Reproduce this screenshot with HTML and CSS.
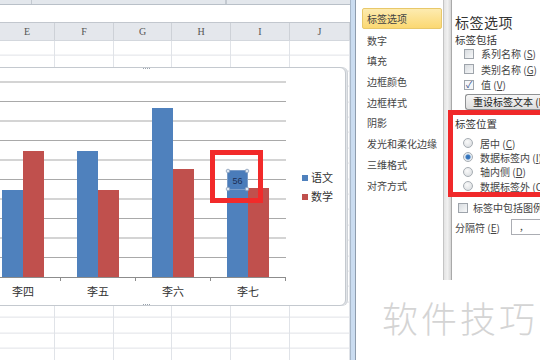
FILE: index.html
```html
<!DOCTYPE html>
<html lang="zh-CN">
<head>
  <meta charset="UTF-8">
  <title>设置数据标签格式</title>
  <link rel="stylesheet" href="styles.css">
</head>
<body>
  <div class="screen">
    <!-- 工作表区域 -->
    <section class="sheet">
      <div class="toolbar">
        <span class="tb-cell tb-a"></span>
        <span class="tb-cell tb-b"></span>
        <span class="tb-cell"></span>
      </div>
      <div class="formula"></div>
      <div class="col-heads">
        <div>E</div><div>F</div><div>G</div><div>H</div><div>I</div><div>J</div>
      </div>
      <div class="cells">
        <div></div><div></div><div></div><div></div><div></div><div></div>
      </div>

      <!-- 图表 -->
      <div class="chart">
        <svg class="plot" width="346" height="239" viewBox="0 67 346 239">
          <g class="grid">
            <line x1="0" y1="82" x2="286" y2="82"/>
            <line x1="0" y1="101.5" x2="286" y2="101.5"/>
            <line x1="0" y1="121" x2="286" y2="121"/>
            <line x1="0" y1="140.5" x2="286" y2="140.5"/>
            <line x1="0" y1="160" x2="286" y2="160"/>
            <line x1="0" y1="179.5" x2="286" y2="179.5"/>
            <line x1="0" y1="199" x2="286" y2="199"/>
            <line x1="0" y1="218.5" x2="286" y2="218.5"/>
            <line x1="0" y1="238" x2="286" y2="238"/>
            <line x1="0" y1="257.5" x2="286" y2="257.5"/>
          </g>
          <g class="blue">
            <rect x="2" y="190" width="21" height="87"/>
            <rect x="77" y="151" width="21" height="126"/>
            <rect x="152" y="108" width="21" height="169"/>
            <rect x="227" y="170" width="21" height="107"/>
          </g>
          <g class="red">
            <rect x="23" y="151" width="21" height="126"/>
            <rect x="98" y="190" width="21" height="87"/>
            <rect x="173" y="169" width="21" height="108"/>
            <rect x="248" y="188" width="21" height="89"/>
          </g>
          <g class="axis">
            <line x1="0" y1="277.5" x2="286" y2="277.5"/>
            <line x1="60.5" y1="277" x2="60.5" y2="281"/>
            <line x1="135.5" y1="277" x2="135.5" y2="281"/>
            <line x1="210.5" y1="277" x2="210.5" y2="281"/>
            <line x1="285.5" y1="277" x2="285.5" y2="281"/>
          </g>
          <g class="cats">
            <text x="23" y="296">李四</text>
            <text x="98" y="296">李五</text>
            <text x="173" y="296">李六</text>
            <text x="248" y="296">李七</text>
          </g>

          <!-- 选中的数据标签 -->
          <rect class="label-box" x="227.5" y="170.5" width="20" height="19"/>
          <text class="label-text" x="237.5" y="184">56</text>
          <g class="handles">
            <circle cx="228" cy="171" r="1.8"/>
            <circle cx="247" cy="171" r="1.8"/>
            <circle cx="228" cy="189" r="1.8"/>
            <circle cx="247" cy="189" r="1.8"/>
          </g>
          <rect class="mark" x="212.5" y="152.5" width="48" height="48"/>

          <g class="legend">
            <rect x="302" y="175" width="6" height="6" fill="#4f81bd"/>
            <text x="311" y="182">语文</text>
            <rect x="302" y="194" width="6" height="6" fill="#c0504d"/>
            <text x="311" y="201">数学</text>
          </g>

          <g class="dots">
            <rect x="143" y="68" width="1" height="1"/>
            <rect x="145" y="68" width="1" height="1"/>
            <rect x="147" y="68" width="1" height="1"/>
            <rect x="149" y="68" width="1" height="1"/>
            <rect x="143" y="304" width="1" height="1"/>
            <rect x="145" y="304" width="1" height="1"/>
            <rect x="147" y="304" width="1" height="1"/>
            <rect x="149" y="304" width="1" height="1"/>
          </g>
        </svg>
      </div>
    </section>

    <div class="frame"></div>

    <!-- 设置数据标签格式 对话框 -->
    <section class="dialog">
      <nav class="nav">
        <div class="nav-item active">标签选项</div>
        <div class="nav-item">数字</div>
        <div class="nav-item">填充</div>
        <div class="nav-item">边框颜色</div>
        <div class="nav-item">边框样式</div>
        <div class="nav-item">阴影</div>
        <div class="nav-item">发光和柔化边缘</div>
        <div class="nav-item">三维格式</div>
        <div class="nav-item">对齐方式</div>
      </nav>
      <div class="divider"></div>
      <div class="pane">
        <div class="pane-title">标签选项</div>
        <div class="group-title">标签包括</div>
        <div class="check-row"><span class="box"></span>系列名称 (<u>S</u>)</div>
        <div class="check-row"><span class="box"></span>类别名称 (<u>G</u>)</div>
        <div class="check-row"><span class="box checked">✓</span>值 (<u>V</u>)</div>
        <div class="reset-btn">重设标签文本 (R)</div>

        <div class="group-title pos-title">标签位置</div>
        <div class="radio-row"><span class="radio"></span>居中 (<u>C</u>)</div>
        <div class="radio-row"><span class="radio on"></span>数据标签内 (<u>I</u>)</div>
        <div class="radio-row"><span class="radio"></span>轴内侧 (<u>D</u>)</div>
        <div class="radio-row"><span class="radio"></span>数据标签外 (<u>O</u>)</div>

        <div class="check-row legend-row"><span class="box"></span>标签中包括图例项标示 (L)</div>
        <div class="sep-row">分隔符 (<u>E</u>)<span class="select">,</span></div>

        <div class="red-mark"></div>
      </div>
      <div class="watermark">软件技巧</div>
    </section>
  </div>
</body>
</html>
```

FILE: styles.css
```css
body {
  margin: 0;
  padding: 0;
  font-family: "Noto Sans CJK SC", "Noto Sans", sans-serif;
  background-color: white;
}

.screen {
  width: 540px;
  height: 360px;
  display: flex;
  overflow: hidden;
}

/* 工作表 */
.sheet {
  position: relative;
  width: 350px;
  flex: none;
  display: flex;
  flex-direction: column;
  overflow: hidden;
}

.toolbar {
  height: 4px;
  display: flex;
  background-color: #e3e7ec;
  border-bottom: 1px solid #b9c0c8;
}

.tb-cell {
  border-right: 1px solid #c3c9d0;
}

.tb-a {
  width: 31px;
}

.tb-b {
  width: 193px;
}

.formula {
  height: 17px;
  background-color: white;
}

.col-heads {
  height: 17px;
  display: grid;
  grid-template-columns: 55px 59px 58px 59px 59px 60px;
  background-color: #e4e7ec;
  border-top: 1px solid #c2c7ce;
  border-bottom: 1px solid #d3d7dd;
}

.col-heads div {
  border-right: 1px solid #cdd1d7;
  font-family: "Liberation Serif", serif;
  font-size: 10px;
  line-height: 17px;
  color: #555;
  text-align: center;
}

.cells {
  flex: 1;
  display: grid;
  grid-template-columns: 55px 59px 58px 59px 59px 60px;
  background-image: repeating-linear-gradient(to bottom, transparent 0, transparent 14.4px, #dfe2e7 14.4px, #dfe2e7 15.4px);
  background-position: 0 -0.4px;
}

.cells div {
  border-right: 1px solid #e0e3e8;
}

/* 图表 */
.chart {
  position: absolute;
  left: -10px;
  top: 67px;
  width: 354px;
  height: 237px;
  background-color: white;
  border: 1px solid #c4c9cf;
  border-radius: 6px;
  box-shadow: 1px 0 0 #e1e4e8, 2px 0 0 #cfd3d8;
}

.plot {
  position: absolute;
  left: 9px;
  top: -1px;
}

.grid line {
  stroke: #a9a9a9;
  stroke-width: 1;
}

.blue rect {
  fill: #4f81bd;
}

.red rect {
  fill: #c0504d;
}

.axis line {
  stroke: #8c8c8c;
  stroke-width: 1;
}

.cats text {
  font-family: "Noto Sans CJK SC", sans-serif;
  font-size: 11px;
  fill: #333;
  text-anchor: middle;
}

.label-box {
  fill: #4a7cba;
  stroke: #7a9cc8;
  stroke-width: 1;
}

.label-text {
  font-family: "Liberation Sans", sans-serif;
  font-size: 9px;
  fill: #1c2f55;
  text-anchor: middle;
}

.handles circle {
  fill: #dfe8f3;
  stroke: #8aa0bb;
  stroke-width: 0.8;
}

.mark {
  fill: none;
  stroke: #f22a2a;
  stroke-width: 5;
}

.legend text {
  font-family: "Noto Sans CJK SC", sans-serif;
  font-size: 11px;
  fill: #333;
}

.dots rect {
  fill: #9aa3ad;
}

/* 对话框边框 */
.frame {
  width: 4px;
  flex: none;
  background-color: #cadcf0;
  border-left: 1px solid #a8b8ca;
  border-right: 1px solid #8e9cad;
}

.dialog {
  position: relative;
  flex: 1;
  display: flex;
  align-items: flex-start;
  background-color: white;
  padding-left: 6px;
  color: #444;
  font-size: 10px;
}

.nav {
  width: 80px;
  flex: none;
  padding-top: 8px;
}

.nav-item {
  height: 20.7px;
  line-height: 20.7px;
  padding-left: 5px;
  white-space: nowrap;
}

.nav-item.active {
  height: 19px;
  line-height: 19px;
  margin-bottom: 1.7px;
  background: linear-gradient(to bottom, #fdebb0, #fbd872);
  border: 1px solid #e8c86a;
  border-radius: 2px;
  padding-left: 4px;
}

.divider {
  width: 7px;
  height: 280px;
  flex: none;
  margin-left: 1px;
  background: linear-gradient(to right, #e3e3e3, #f0f0f0, #d6d6d6);
  border-left: 1px solid #c4c4c4;
  border-right: 1px solid #a9a9a9;
}

.pane {
  position: relative;
  flex: 1;
  padding-left: 3px;
  white-space: nowrap;
}

.pane-title {
  margin-top: 13px;
  font-size: 14px;
  letter-spacing: 0.5px;
  line-height: 18px;
  color: #333;
}

.group-title {
  margin-top: 2px;
  line-height: 13px;
  font-size: 10.5px;
  color: #333;
}

.check-row {
  height: 15.5px;
  display: flex;
  align-items: center;
  padding-left: 9px;
}

.box {
  width: 8px;
  height: 8px;
  margin-right: 7px;
  border: 1px solid #9ea4ab;
  background: linear-gradient(to bottom right, #d8dce0, #f7f8f9);
  font-size: 9px;
  line-height: 8px;
  color: #34518a;
  text-align: center;
}

.box.checked {
  background: #f4f6f9;
}

.reset-btn {
  margin-top: 1.5px;
  margin-left: 10px;
  height: 14px;
  line-height: 14px;
  padding-left: 7px;
  border: 1px solid #8f9193;
  border-right: none;
  border-radius: 3px 0 0 3px;
  background: linear-gradient(to bottom, #f6f6f6, #dedede);
  color: #222;
}

.pos-title {
  margin-top: 7px;
  line-height: 14px;
}

.radio-row {
  height: 14.3px;
  display: flex;
  align-items: center;
  padding-left: 8px;
}

.pos-title + .radio-row {
  margin-top: 5px;
}

.radio {
  width: 8px;
  height: 8px;
  margin-right: 7px;
  border: 1px solid #a7adb3;
  border-radius: 50%;
  background: radial-gradient(circle at 40% 35%, #fafafa, #d4d8dc);
}

.radio.on {
  background: radial-gradient(circle, #2f6db4 0, #3d7cc2 2px, #d9e4ef 3px, #eef2f6 4px);
}

.legend-row {
  margin-top: 7px;
  height: 15px;
  padding-left: 3px;
}

.legend-row .box {
  margin-right: 5px;
}

.sep-row {
  margin-top: 4px;
  height: 16px;
  display: flex;
  align-items: center;
}

.select {
  margin-left: 11px;
  flex: 1;
  height: 14px;
  line-height: 12px;
  padding-left: 8px;
  border: 1px solid #abadb3;
  border-right: none;
  background-color: white;
}

u {
  text-decoration: underline;
}

.red-mark {
  position: absolute;
  left: -4px;
  top: 110px;
  width: 100px;
  height: 77px;
  border: 5px solid #f0292a;
  border-right: none;
}

.watermark {
  position: absolute;
  left: 26px;
  top: 295px;
  font-size: 36px;
  font-weight: 300;
  line-height: 44px;
  letter-spacing: 3px;
  color: #d4d4d4;
  white-space: nowrap;
}
```
